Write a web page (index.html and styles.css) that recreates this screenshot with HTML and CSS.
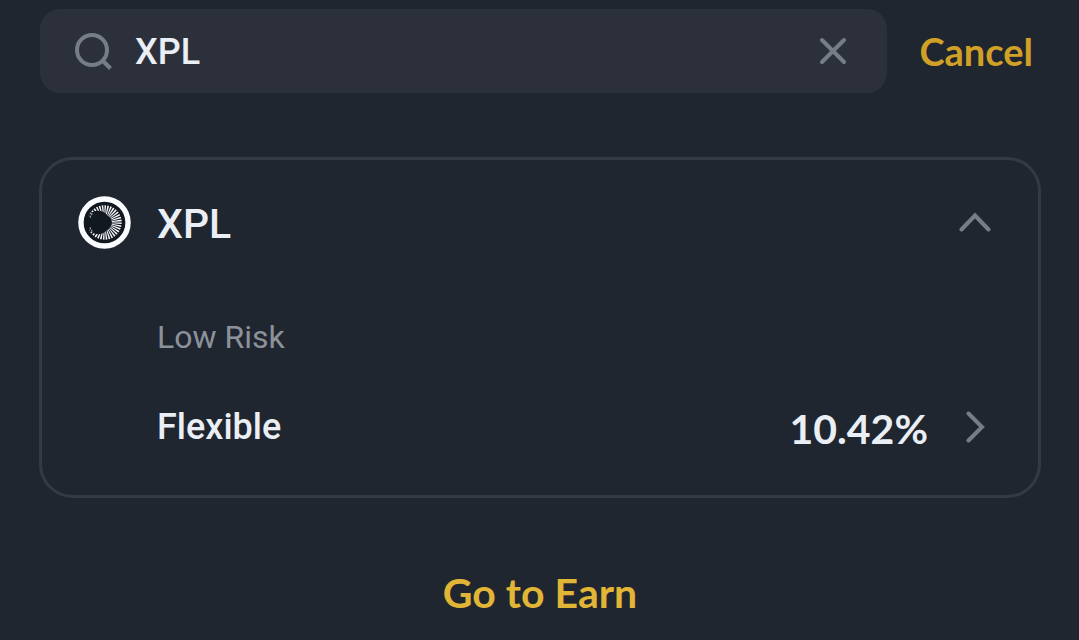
FILE: index.html
```html
<!DOCTYPE html>
<html lang="en">
<head>
<meta charset="utf-8">
<meta name="viewport" content="width=device-width, initial-scale=1">
<title>Earn search</title>
<link rel="stylesheet" href="styles.css">
</head>
<body>
<main class="page">
  <form class="search" role="search">
    <div class="search-box">
      <svg class="search-icon" viewBox="0 0 40 40" aria-hidden="true"><circle cx="17" cy="19" r="15"/><path d="M27.500 29.500 35.500 37.500"/></svg>
      <input class="search-input" type="text" value="XPL" aria-label="Search coins">
      <button class="icon-button" type="button" aria-label="Clear search">
        <svg class="clear-icon" viewBox="0 0 28 28" aria-hidden="true"><path d="M3 3 25 25M25 3 3 25"/></svg>
      </button>
    </div>
    <button class="link-button cancel" type="button">Cancel</button>
  </form>

  <section class="card">
    <button class="asset" type="button" aria-expanded="true">
      <svg class="coin" viewBox="0 0 54 54" aria-hidden="true">
        <circle cx="27" cy="27" r="24" fill="#12181f" stroke="#fafcff" stroke-width="5.500"/>
        <circle cx="27" cy="27" r="12.500" fill="none" stroke="#fafcff" stroke-width="10" pathLength="72" stroke-dasharray="1.100 0.900"/>
        <circle cx="20.500" cy="27" r="12" fill="#12181f" stroke="none"/>
        <path d="M12.500 20v2M14 17.500v2M12.500 32v2M14 34.500v2" stroke="#c8ccd2" stroke-width="1"/>
      </svg>
      <span class="asset-name">XPL</span>
      <svg class="chevron-up" viewBox="0 0 32 20" aria-hidden="true"><path d="M2.500 17.500 16 3.500 29.500 17.500"/></svg>
    </button>
    <p class="risk">Low Risk</p>
    <button class="product" type="button">
      <span class="product-name">Flexible</span>
      <span class="rate">10.42%</span>
      <svg class="chevron-right" viewBox="0 0 20 32" aria-hidden="true"><path d="M3.500 2.500 17 16 3.500 29.500"/></svg>
    </button>
  </section>

  <button class="link-button earn" type="button">Go to Earn</button>
</main>
</body>
</html>
```

FILE: styles.css
```css
* {
  box-sizing: border-box;
}

body {
  margin: 0;
  background: #20262f;
  color: #eaeef5;
  font-family: Roboto, "Noto Sans", sans-serif;
}

button {
  padding: 0;
  border: 0;
  background: none;
  color: inherit;
  font: inherit;
  text-align: left;
  cursor: pointer;
}

svg {
  display: block;
  flex: none;
  fill: none;
  stroke: #767d88;
  stroke-width: 4;
}

.page {
  display: flex;
  flex-direction: column;
  padding: 9px 38px 0 39px;
}

.search {
  display: flex;
  align-items: center;
  gap: 32px;
  padding: 0 8px 0 1px;
}

.search-box {
  display: flex;
  flex: 1;
  align-items: center;
  min-width: 0;
  height: 84px;
  padding: 0 40px 0 35px;
  border-radius: 20px;
  background: #2b303b;
}

.search-icon {
  width: 40px;
  height: 40px;
}

.search-input {
  flex: 1;
  min-width: 0;
  padding: 2px 20px 0;
  border: 0;
  outline: 0;
  background: none;
  color: inherit;
  font: 500 36px/44px Roboto, "Noto Sans", sans-serif;
}

.clear-icon {
  width: 28px;
  height: 28px;
  stroke-linecap: round;
}

.link-button {
  font-family: Lato, sans-serif;
  font-weight: 700;
}

.cancel {
  color: #d1a127;
  font-size: 38px;
  line-height: 44px;
}

.card {
  display: flex;
  flex-direction: column;
  margin-top: 64px;
  padding: 34px 47px 40px 36px;
  border: 3px solid #343a44;
  border-radius: 34px;
}

.asset {
  display: flex;
  align-items: center;
  gap: 26px;
}

.coin {
  width: 53px;
  height: 53px;
}

.asset-name {
  flex: 1;
  padding-top: 4px;
  font-size: 41px;
  font-weight: 500;
  line-height: 52px;
}

.chevron-up {
  width: 32px;
  height: 20px;
  stroke-linecap: round;
}

.risk {
  margin: 67px 0 0 79px;
  color: #8c929c;
  font-size: 32px;
  line-height: 40px;
}

.product {
  display: flex;
  align-items: center;
  margin: 44px 0 2px 79px;
  padding-right: 6px;
}

.product-name {
  flex: 1;
  font-size: 36px;
  font-weight: 500;
  line-height: 44px;
}

.rate {
  padding-top: 4px;
  font-family: Lato, sans-serif;
  font-size: 41px;
  font-weight: 700;
  line-height: 48px;
}

.chevron-right {
  width: 20px;
  height: 32px;
  margin-left: 37px;
  stroke-linecap: round;
}

.earn {
  align-self: center;
  margin-top: 71px;
  color: #e1b536;
  font-size: 41px;
  line-height: 48px;
}
```
